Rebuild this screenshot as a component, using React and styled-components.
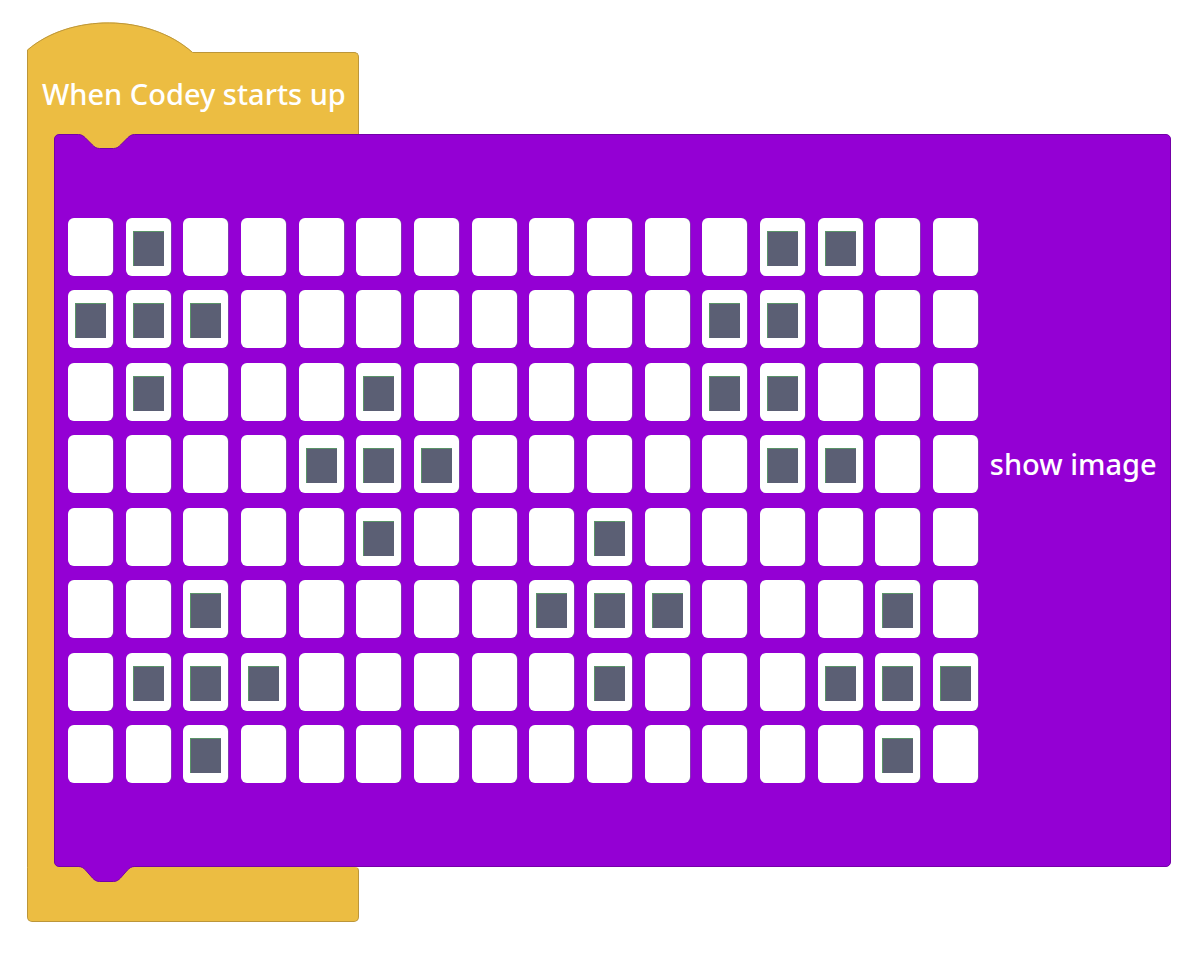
import React from 'react';
import styled, { createGlobalStyle } from 'styled-components';

const YELLOW = '#ECBD42';
const YELLOW_EDGE = '#BC963A';
const PURPLE = '#9400D4';
const PURPLE_EDGE = '#7400A8';
const PIXEL_ON = '#5B5F74';

const Global = createGlobalStyle`
  html, body { margin: 0; padding: 0; background: #fff; }
  body { font-family: "Noto Sans", "DejaVu Sans", sans-serif; }
`;

const Page = styled.div`
  width: 1204px;
  height: 962px;
  box-sizing: border-box;
  padding: 22px 0 0 27px;
`;

const Script = styled.div`
  display: flex;
  flex-direction: column;
  align-items: flex-start;
`;

const Dome = styled.svg`
  display: block;
  position: relative;
  z-index: 2;
  margin-bottom: -1px;
  overflow: visible;
`;

const HatHead = styled.div`
  width: 332px;
  height: 82px;
  box-sizing: border-box;
  background: ${YELLOW};
  border: 1px solid ${YELLOW_EDGE};
  border-bottom: none;
  border-top-right-radius: 5px;
  display: flex;
  align-items: center;
  padding-left: 14px;
  color: #fff;
  font-size: 29px;
  font-weight: 500;
  white-space: nowrap;
`;

const Mouth = styled.div`
  display: flex;
  align-items: stretch;
`;

const Arm = styled.div`
  width: 31px;
  flex-shrink: 0;
  background: ${YELLOW};
  border-left: 1px solid ${YELLOW_EDGE};
  box-sizing: border-box;
`;

const Stack = styled.div`
  position: relative;
  z-index: 1;
  margin-left: -4px;
  width: 1117px;
  box-sizing: border-box;
  background: ${PURPLE};
  border: 1px solid ${PURPLE_EDGE};
  border-radius: 5px;
  padding: 83px 13px 83px 13px;
  display: flex;
  align-items: flex-start;
`;

const Notch = styled.svg`
  position: absolute;
  left: 23px;
  ${(p) => (p.$bottom ? 'bottom: -17px;' : 'top: -1px;')}
  overflow: visible;
`;

const Matrix = styled.div`
  display: grid;
  grid-template-columns: repeat(16, 45px);
  grid-auto-rows: 58px;
  column-gap: 12.67px;
  row-gap: 14.47px;
  flex-shrink: 0;
`;

const Pixel = styled.div`
  background: #fff;
  border-radius: 6px;
  box-sizing: border-box;
  padding: 13px 7px 10px 7px;
  display: flex;
  box-shadow: 0.5px 0 0 rgba(90, 190, 100, 0.6);
`;

const Lit = styled.div`
  flex: 1;
  background: ${PIXEL_ON};
  box-shadow: inset 1px 1px 0 rgba(90, 170, 100, 0.7);
`;

const Label = styled.div`
  margin: 229px 0 0 12px;
  color: #fff;
  font-size: 29px;
  font-weight: 500;
  line-height: 34px;
  white-space: nowrap;
`;

const Foot = styled.div`
  width: 332px;
  height: 55px;
  box-sizing: border-box;
  background: ${YELLOW};
  border: 1px solid ${YELLOW_EDGE};
  border-top-color: transparent;
  border-radius: 0 4px 5px 5px;
`;

const PATTERN = [
  [1, 12, 13],
  [0, 1, 2, 11, 12],
  [1, 5, 11, 12],
  [4, 5, 6, 12, 13],
  [5, 9],
  [2, 8, 9, 10, 14],
  [1, 2, 3, 9, 13, 14, 15],
  [2, 14],
];

const curve = (d) =>
  `c 3,0 5,1.5 7,3.5 l 7,${d} c 1.5,1.5 3.5,3.5 7,3.5 h 14 c 3.5,0 5.5,-2 7,-3.5 l 7,-${d} c 2,-2 4,-3.5 7,-3.5`;

function NotchShape({ bottom }) {
  const fill = bottom ? PURPLE : YELLOW;
  const c = curve(bottom ? 8 : 7);
  return (
    <Notch $bottom={bottom} width="58" height="17" viewBox="0 0 58 17">
      <path d={`M0.5,0 V0.5 ${c} V0 Z`} fill={fill} />
      <path d={`M0.5,0.5 ${c}`} fill="none" stroke={PURPLE_EDGE} strokeWidth="1" />
    </Notch>
  );
}

export default function App() {
  return (
    <Page>
      <Global />
      <Script>
        <Dome width="167" height="31" viewBox="0 0 167 31">
          <path d="M0,31 V28 C43,-9 122,-9 166,30.5 V31 Z" fill={YELLOW} />
          <path d="M0.5,31 V28 C43,-8.5 122,-8.5 165.5,30.5" fill="none" stroke={YELLOW_EDGE} strokeWidth="1" />
        </Dome>
        <HatHead>When Codey starts up</HatHead>
        <Mouth>
          <Arm />
          <Stack>
            <NotchShape />
            <Matrix>
              {PATTERN.map((row, r) =>
                Array.from({ length: 16 }, (_, c) => (
                  <Pixel key={`${r}-${c}`}>{row.includes(c) && <Lit />}</Pixel>
                ))
              )}
            </Matrix>
            <Label>show image</Label>
            <NotchShape bottom />
          </Stack>
        </Mouth>
        <Foot />
      </Script>
    </Page>
  );
}
